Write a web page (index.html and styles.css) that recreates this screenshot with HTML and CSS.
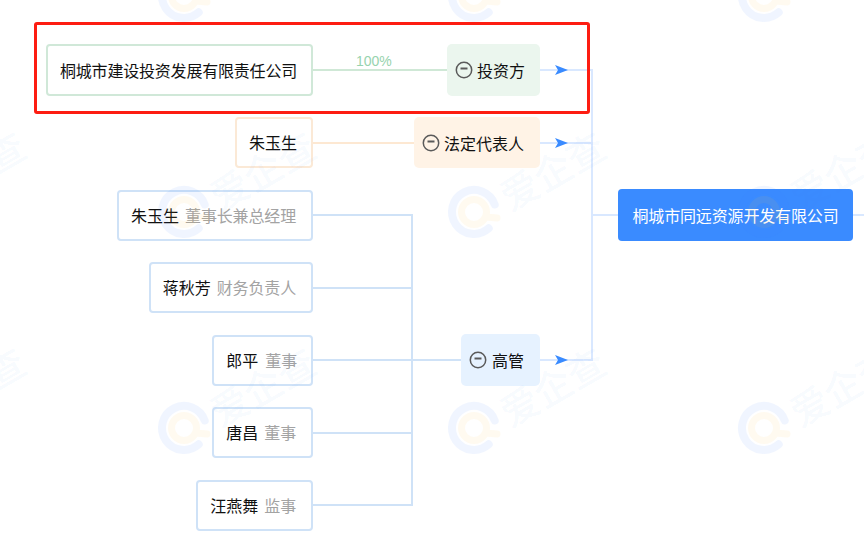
FILE: index.html
```html
<!DOCTYPE html>
<html lang="zh">
<head>
<meta charset="utf-8">
<title>股权结构</title>
<link rel="stylesheet" href="styles.css">
</head>
<body>
<div class="canvas">
  <svg class="layer" width="864" height="546" viewBox="0 0 864 546">
    <path class="ln-green" d="M313 70H447"/>
    <path class="ln-orange" d="M313 143H414"/>
    <path class="ln-blue" d="M313 215H412M313 288H412M313 360H461M313 433H412M313 505H412M412 214V506"/>
    <path class="ln-right" d="M540 70H592M540 143H592M540 360H592M592 69V361M592 215H618M853 215H864"/>
    <path class="arrow" d="M555 65L568 70L555 75L558 70Z"/>
    <path class="arrow" d="M555 138L568 143L555 148L558 143Z"/>
    <path class="arrow" d="M555 355L568 360L555 365L558 360Z"/>
  </svg>

  <div class="highlight"></div>

  <div class="percent">100%</div>

  <div class="node node-green n-a">桐城市建设投资发展有限责任公司</div>
  <div class="node node-orange n-b">朱玉生</div>
  <div class="node node-blue n-c">朱玉生<span class="role">董事长兼总经理</span></div>
  <div class="node node-blue n-d">蒋秋芳<span class="role">财务负责人</span></div>
  <div class="node node-blue n-e">郎平<span class="role">董事</span></div>
  <div class="node node-blue n-f">唐昌<span class="role">董事</span></div>
  <div class="node node-blue n-g">汪燕舞<span class="role">监事</span></div>

  <div class="tag tag-green t-a"><svg class="minus" width="18" height="18" viewBox="0 0 18 18"><circle cx="9" cy="9" r="7.7"/><path d="M5.500 7.500H12.500"/></svg>投资方</div>
  <div class="tag tag-orange t-b"><svg class="minus" width="18" height="18" viewBox="0 0 18 18"><circle cx="9" cy="9" r="7.7"/><path d="M5.500 7.500H12.500"/></svg>法定代表人</div>
  <div class="tag tag-blue t-c"><svg class="minus" width="18" height="18" viewBox="0 0 18 18"><circle cx="9" cy="9" r="7.7"/><path d="M5.500 7.500H12.500"/></svg>高管</div>

  <div class="center">桐城市同远资源开发有限公司</div>

  <svg class="layer watermark" width="864" height="546" viewBox="0 0 864 546">
    <defs>
      <g id="wm">
        <path class="wm-ring" d="M20.700 -7.500A22 22 0 1 0 14.700 16.300"/>
        <path class="wm-inner" d="M12.500 0A12.500 12.500 0 1 0 -12.500 0A12.500 12.500 0 1 0 12.500 0ZM12 5L23 6"/>
        <text class="wm-text" transform="translate(36.500 0) rotate(-30)">爱企查</text>
      </g>
    </defs>
    <use href="#wm" x="184" y="-4"/>
    <use href="#wm" x="474" y="-4"/>
    <use href="#wm" x="764" y="-4"/>
    <use href="#wm" x="-106" y="212"/>
    <use href="#wm" x="184" y="212"/>
    <use href="#wm" x="474" y="212"/>
    <use href="#wm" x="764" y="212"/>
    <use href="#wm" x="-106" y="428"/>
    <use href="#wm" x="184" y="428"/>
    <use href="#wm" x="474" y="428"/>
    <use href="#wm" x="764" y="428"/>
  </svg>
</div>
</body>
</html>
```
FILE: styles.css
```css
html, body {
  margin: 0;
  padding: 0;
  background: #fff;
}
.canvas {
  position: relative;
  width: 864px;
  height: 546px;
  overflow: hidden;
  font-family: "Noto Sans CJK SC", "Liberation Sans", sans-serif;
  font-size: 16px;
  color: #111;
}
.layer {
  position: absolute;
  left: 0;
  top: 0;
}
.watermark {
  pointer-events: none;
}
.wm-ring {
  fill: none;
  stroke: rgba(60, 130, 250, 0.08);
  stroke-width: 8;
  stroke-linecap: round;
}
.wm-inner {
  fill: none;
  stroke: rgba(255, 190, 70, 0.08);
  stroke-width: 7;
  stroke-linecap: round;
}
.wm-text {
  font-family: "Noto Sans CJK SC", sans-serif;
  font-size: 38px;
  font-weight: 500;
  fill: rgba(60, 130, 250, 0.055);
}
.layer > path {
  fill: none;
  stroke-width: 2;
}
.layer .ln-green { stroke: #cfe8d6; }
.layer .ln-orange { stroke: #fde8d2; }
.layer .ln-blue { stroke: #cfe2f7; }
.layer .ln-right { stroke: #d9e8ff; }
.layer .arrow {
  fill: #3a8bff;
  stroke: none;
}
.highlight {
  position: absolute;
  left: 34px;
  top: 22px;
  width: 550px;
  height: 86px;
  border: 3px solid #fd1d12;
  border-radius: 3px;
}
.percent {
  position: absolute;
  left: 356px;
  top: 52px;
  font-family: "Liberation Sans", sans-serif;
  font-size: 14px;
  line-height: 18px;
  color: #97d3ae;
}
.node {
  position: absolute;
  right: 551px;
  height: 46px;
  display: flex;
  align-items: center;
  padding: 0 15px 1px 12px;
  border: 2px solid;
  border-radius: 4px;
  white-space: nowrap;
}
.node-green { border-color: #d0e8d8; }
.node-orange { border-color: #fbe9d6; }
.node-blue { border-color: #cfe2f7; }
.role {
  margin-left: 6px;
  color: #a3a3a3;
  letter-spacing: -0.15px;
}
.n-a {
  top: 44px;
  height: 47px;
  padding-right: 14px;
  letter-spacing: -0.2px;
}
.n-b {
  top: 117px;
  padding-right: 14px;
}
.n-c { top: 190px; }
.n-d { top: 262px; }
.n-e {
  top: 335px;
  padding-right: 14px;
}
.n-e .role {
  margin-left: 7px;
}
.n-f { top: 407px; }
.n-g { top: 480px; }
.tag {
  position: absolute;
  right: 324px;
  box-sizing: border-box;
  height: 52px;
  display: flex;
  align-items: center;
  gap: 4px;
  padding-left: 8px;
  border-radius: 5px;
  white-space: nowrap;
}
.tag-green { background: #ebf6ee; }
.tag-orange { background: #fff3e6; }
.tag-blue { background: #e6f2ff; }
.t-a {
  top: 44px;
  width: 93px;
}
.t-b {
  top: 117px;
  width: 126px;
  height: 51px;
}
.t-c {
  top: 334px;
  width: 79px;
  gap: 5px;
}
.minus {
  flex: none;
}
.minus circle,
.minus path {
  fill: none;
  stroke: #5a5a5a;
  stroke-width: 1.5;
}
.minus path {
  stroke-width: 2;
}
.center {
  position: absolute;
  left: 618px;
  top: 189px;
  width: 235px;
  height: 52px;
  display: flex;
  align-items: center;
  justify-content: center;
  border-radius: 4px;
  background: #3a8bff;
  color: #fff;
  letter-spacing: -0.15px;
  white-space: nowrap;
}
```
